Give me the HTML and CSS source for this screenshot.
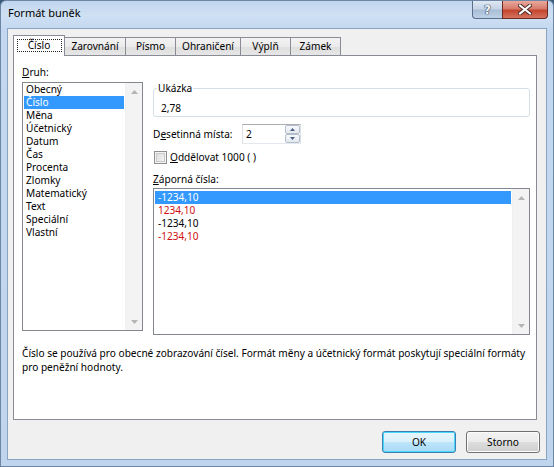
FILE: index.html
```html
<!DOCTYPE html>
<html lang="cs">
<head>
<meta charset="utf-8">
<title>Formát buněk</title>
<link rel="stylesheet" href="styles.css">
</head>
<body>
<div class="window">
  <div class="titlebar">
    <span class="title">Formát buněk</span>
    <div class="caption-btns">
      <div class="cbtn help"><span class="qmark">?</span></div>
      <div class="cbtn close">
        <svg width="14" height="11" viewBox="0 0 14 11"><path d="M2 1.5 L12 9.5 M12 1.5 L2 9.5" stroke="#4a2a2a" stroke-width="4" stroke-linecap="square"/><path d="M2 1.5 L12 9.5 M12 1.5 L2 9.5" stroke="#ffffff" stroke-width="2" stroke-linecap="square"/></svg>
      </div>
    </div>
  </div>
  <div class="client">
    <div class="tabs">
      <div class="tab active"><span class="focus">Číslo</span></div>
      <div class="tab w61">Zarovnání</div>
      <div class="tab w50">Písmo</div>
      <div class="tab w65">Ohraničení</div>
      <div class="tab w50">Výplň</div>
      <div class="tab w50">Zámek</div>
    </div>
    <div class="panel">
      <div class="cols">
        <div class="left">
          <div class="label"><u>D</u>ruh:</div>
          <div class="listbox cat">
            <ul class="items">
              <li>Obecný</li>
              <li class="sel">Číslo</li>
              <li>Měna</li>
              <li>Účetnický</li>
              <li>Datum</li>
              <li>Čas</li>
              <li>Procenta</li>
              <li>Zlomky</li>
              <li>Matematický</li>
              <li>Text</li>
              <li>Speciální</li>
              <li>Vlastní</li>
            </ul>
            <div class="vscroll">
              <span class="arr"><svg width="7" height="4" viewBox="0 0 7 4"><path d="M0 4 L3.5 0 L7 4 Z" fill="#b4b4b4"/></svg></span>
              <span class="arr"><svg width="7" height="4" viewBox="0 0 7 4"><path d="M0 0 L3.5 4 L7 0 Z" fill="#b4b4b4"/></svg></span>
            </div>
          </div>
        </div>
        <div class="right">
          <fieldset class="sample">
            <legend>Ukázka</legend>
            <div class="sample-val">2,78</div>
          </fieldset>
          <div class="spin-row">
            <span class="spin-label">D<u>e</u>setinná místa:</span>
            <div class="spin">
              <span class="spin-val">2</span>
              <div class="spin-btns">
                <span class="sb"><svg width="5" height="3" viewBox="0 0 5 3"><path d="M0 3 L2.5 0 L5 3 Z" fill="#4d6185"/></svg></span>
                <span class="sb"><svg width="5" height="3" viewBox="0 0 5 3"><path d="M0 0 L2.5 3 L5 0 Z" fill="#4d6185"/></svg></span>
              </div>
            </div>
          </div>
          <div class="check-row">
            <span class="checkbox"></span>
            <span><u>O</u>ddělovat 1000 ( )</span>
          </div>
          <div class="label neg-label"><u>Z</u>áporná čísla:</div>
          <div class="listbox neg">
            <ul class="items">
              <li class="sel">-1234,10</li>
              <li class="red">1234,10</li>
              <li>-1234,10</li>
              <li class="red">-1234,10</li>
            </ul>
            <div class="vscroll">
              <span class="arr"><svg width="7" height="4" viewBox="0 0 7 4"><path d="M0 4 L3.5 0 L7 4 Z" fill="#b4b4b4"/></svg></span>
              <span class="arr"><svg width="7" height="4" viewBox="0 0 7 4"><path d="M0 0 L3.5 4 L7 0 Z" fill="#b4b4b4"/></svg></span>
            </div>
          </div>
        </div>
      </div>
      <p class="desc">Číslo se používá pro obecné zobrazování čísel. Formát měny a účetnický formát poskytují speciální formáty<br>pro peněžní hodnoty.</p>
    </div>
    <div class="buttons">
      <button class="btn default">OK</button>
      <button class="btn">Storno</button>
    </div>
  </div>
</div>
</body>
</html>
```
FILE: styles.css
```css
* { box-sizing: border-box; }
html, body { margin: 0; padding: 0; }
body {
  width: 554px;
  height: 467px;
  overflow: hidden;
  background: #3a5a7a;
  font-family: "Noto Sans", sans-serif;
  font-size: 10.1px;
  color: #000;
}
.window {
  width: 554px;
  height: 467px;
  border: 1px solid #6d86a6;
  border-radius: 6px 6px 0 0;
  background: linear-gradient(180deg, #c0d6ef 0px, #cfe0f3 14px, #c3d8f0 28px, #bfd5ee 100%);
  display: flex;
  flex-direction: column;
}
.titlebar {
  height: 27px;
  display: flex;
  align-items: flex-start;
  padding-left: 7px;
}
.title {
  font-size: 11px;
  line-height: 14px;
  margin-top: 5px;
  color: #000;
}
.caption-btns {
  margin-left: auto;
  margin-right: 5px;
  display: flex;
}
.cbtn {
  height: 18px;
  border: 1px solid #5a6f8c;
  border-top: none;
  display: flex;
  align-items: center;
  justify-content: center;
}
.help {
  width: 30px;
  border-radius: 0 0 0 4px;
  border-right: none;
  background: linear-gradient(180deg, #dfe8f3 0%, #c6d4e6 45%, #a9bdd6 55%, #bcd0e6 100%);
}
.qmark {
  font-family: "DejaVu Sans", sans-serif;
  font-size: 12px;
  font-weight: bold;
  line-height: 12px;
  color: #f4f7fb;
  text-shadow: 0 0 1px #2c3e58, 0 0 1px #2c3e58, 0 0 1px #2c3e58;
}
.close {
  width: 46px;
  border-radius: 0 0 4px 0;
  border-color: #6e2a22;
  background: linear-gradient(180deg, #e9a99c 0%, #d67c6c 45%, #c4452f 55%, #d5745f 100%);
}
.close svg { display: block; }
.client {
  margin: 0 6px 0 6px;
  height: 432px;
  border: 1px solid #8aa3c2;
  background: #f0f0f0;
  display: flex;
  flex-direction: column;
}
.tabs {
  display: flex;
  align-items: flex-end;
  margin-left: 5px;
  margin-top: 6px;
  height: 20px;
  position: relative;
  z-index: 1;
}
.tab {
  height: 18px;
  border: 1px solid #898c95;
  border-bottom: none;
  border-left: none;
  background: linear-gradient(180deg, #f3f3f3 0%, #ebebeb 50%, #dedede 51%, #e6e6e6 100%);
  display: flex;
  align-items: center;
  justify-content: center;
  line-height: 14px;
  padding-bottom: 1px;
}
.tab.active {
  width: 52px;
  height: 21px;
  margin-bottom: -1px;
  background: #fff;
  border-left: 1px solid #898c95;
  padding-bottom: 2px;
}
.focus {
  border: 1px dotted #222;
  width: 45px;
  height: 13px;
  display: flex;
  align-items: center;
  justify-content: center;
  line-height: 12px;
}
.w61 { width: 61px; }
.w50 { width: 50px; }
.w65 { width: 65px; }
.panel {
  margin-left: 5px;
  width: 524px;
  height: 365px;
  border: 1px solid #898c95;
  background: #fff;
  padding: 9px 6px 0 8px;
}
.cols {
  display: flex;
  align-items: flex-start;
  gap: 10px;
}
.left { width: 121px; }
.right { width: 377px; }
.label {
  line-height: 14px;
  height: 14px;
  white-space: nowrap;
}
.listbox {
  border: 1px solid #828790;
  display: flex;
  background: #fff;
}
.listbox.cat {
  margin-top: 3px;
  height: 249px;
}
.items {
  list-style: none;
  margin: 0;
  padding: 0;
  flex: 1;
}
.items li {
  height: 13px;
  line-height: 13px;
  padding-left: 2px;
  margin: 0 1px;
  white-space: nowrap;
}
.items li.sel {
  background: #3399ff;
  color: #fff;
}
.items li.red { color: #d01010; }
.vscroll {
  width: 17px;
  background: #f3f3f3;
  border-left: 1px solid #f0f0f0;
  display: flex;
  flex-direction: column;
  justify-content: space-between;
}
.arr {
  height: 17px;
  display: flex;
  align-items: center;
  justify-content: center;
}
.arr svg { display: block; }
.sample {
  margin: 16px 0 0 0;
  padding: 0 0 0 7px;
  border: 1px solid #d5dfe5;
  border-radius: 3px;
  height: 36px;
  min-width: 0;
}
.sample legend {
  padding: 0 1px;
  margin-left: -4px;
  line-height: 14px;
}
.sample-val {
  margin-top: 6px;
  line-height: 14px;
}
.spin-row {
  display: flex;
  align-items: center;
  height: 20px;
  margin-top: 7px;
}
.spin-label {
  width: 89px;
  white-space: nowrap;
}
.spin {
  width: 59px;
  height: 20px;
  border: 1px solid #abadb3;
  border-left-color: #dbdfe6;
  border-right-color: #dbdfe6;
  border-bottom-color: #e3e9ef;
  display: flex;
  align-items: center;
  justify-content: space-between;
  padding-left: 3px;
  background: #fff;
}
.spin-btns {
  display: flex;
  flex-direction: column;
  width: 15px;
  height: 18px;
  gap: 0;
}
.sb {
  flex: 1;
  border: 1px solid #b5bfcc;
  border-radius: 2px;
  background: linear-gradient(180deg, #f7f9fb 0%, #e3e8ef 100%);
  display: flex;
  align-items: center;
  justify-content: center;
}
.sb svg { display: block; }
.check-row {
  display: flex;
  align-items: center;
  height: 13px;
  margin-top: 7px;
  padding-left: 1px;
  gap: 3px;
  line-height: 13px;
}
.checkbox {
  width: 13px;
  height: 13px;
  border: 1px solid #8e8f8f;
  background: linear-gradient(135deg, #dcdcdc 0%, #f4f4f4 100%);
  box-shadow: inset 0 0 0 1px #f4f4f4, inset 0 0 0 2px #c9c9c9;
}
.neg-label { margin-top: 8px; }
.listbox.neg {
  margin-top: 2px;
  height: 147px;
}
.listbox.neg .items { padding-top: 2px; }
.listbox.neg .items li { padding-left: 3px; }
.desc {
  margin: 11px 0 0 0;
  line-height: 14px;
  white-space: nowrap;
}
.buttons {
  display: flex;
  justify-content: flex-end;
  gap: 10px;
  margin-top: 11px;
  margin-right: 6px;
}
.btn {
  width: 74px;
  height: 22px;
  border: 1px solid #707070;
  border-radius: 3px;
  font-family: "Noto Sans", sans-serif;
  font-size: 10.1px;
  color: #000;
  padding: 0;
  background: linear-gradient(180deg, #f2f2f2 0%, #ebebeb 50%, #dddddd 51%, #cfcfcf 100%);
  box-shadow: inset 0 0 0 1px #fcfcfc;
}
.btn.default {
  border-color: #3c7fb1;
  background: linear-gradient(180deg, #eaf6fd 0%, #d9f0fc 50%, #bee6fd 51%, #a7d9f5 100%);
  box-shadow: inset 0 0 0 1px #48d8fb;
}
```
